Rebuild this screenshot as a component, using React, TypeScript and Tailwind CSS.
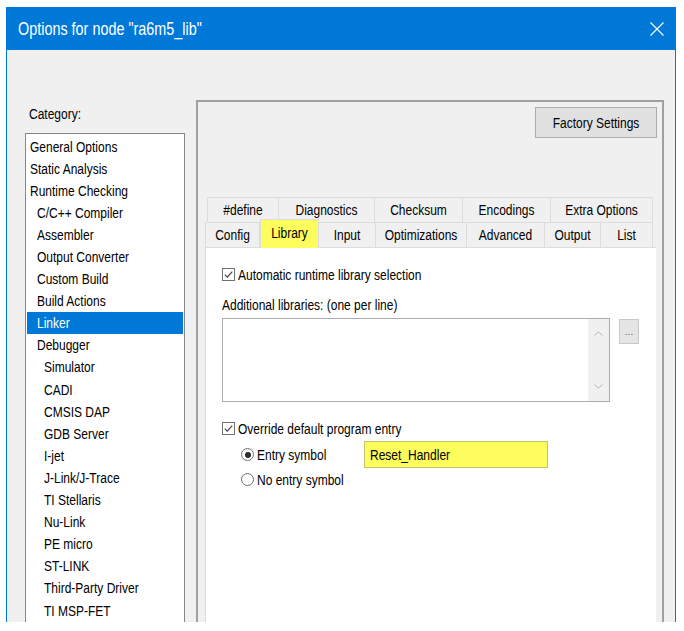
import React from "react";

// category tree: label + indent level
const categories: [string, number][] = [
  ["General Options", 0],
  ["Static Analysis", 0],
  ["Runtime Checking", 0],
  ["C/C++ Compiler", 1],
  ["Assembler", 1],
  ["Output Converter", 1],
  ["Custom Build", 1],
  ["Build Actions", 1],
  ["Linker", 1],
  ["Debugger", 1],
  ["Simulator", 2],
  ["CADI", 2],
  ["CMSIS DAP", 2],
  ["GDB Server", 2],
  ["I-jet", 2],
  ["J-Link/J-Trace", 2],
  ["TI Stellaris", 2],
  ["Nu-Link", 2],
  ["PE micro", 2],
  ["ST-LINK", 2],
  ["Third-Party Driver", 2],
  ["TI MSP-FET", 2],
];

const indent = ["pl-[4px]", "pl-[11px]", "pl-[18px]"];

const topTabs = [
  { label: "#define", w: "w-[72px]" },
  { label: "Diagnostics", w: "w-[96px]" },
  { label: "Checksum", w: "w-[88px]" },
  { label: "Encodings", w: "w-[88px]" },
  { label: "Extra Options", w: "w-[102px]" },
];

const bottomTabs = [
  { label: "Config", w: "w-[55px]" },
  { label: "Library", w: "w-[59px]" },
  { label: "Input", w: "w-[57px]" },
  { label: "Optimizations", w: "w-[91px]" },
  { label: "Advanced", w: "w-[78px]" },
  { label: "Output", w: "w-[56px]" },
  { label: "List", w: "w-[52px]" },
];

// text in the shot is drawn taller than its width suggests
function T({ children }: { children: React.ReactNode }) {
  return <span className="inline-block scale-y-[1.28] whitespace-nowrap">{children}</span>;
}

function CheckBox() {
  return (
    <div className="flex h-[13px] w-[13px] items-center justify-center border border-[#707070] bg-white">
      <svg width="11" height="11" viewBox="0 0 11 11">
        <path d="M1.8 5.6 L4.3 8.1 L9.3 2.6" fill="none" stroke="#3a3a3a" strokeWidth="1.1" />
      </svg>
    </div>
  );
}

function Radio({ on }: { on?: boolean }) {
  return (
    <div className="flex h-[13px] w-[13px] items-center justify-center rounded-full border border-[#707070] bg-white">
      {on && <div className="h-[6px] w-[6px] rounded-full bg-[#2b2b2b]" />}
    </div>
  );
}

export default function App() {
  return (
    <div className="h-[631px] w-[684px] overflow-hidden bg-white pl-[6px] pt-[7px] font-['Liberation_Sans',Arial,sans-serif] text-[12px] leading-[14px] text-black">
      <div className="flex h-[615px] w-[670px] flex-col overflow-hidden border-x border-[#0078d7] bg-[#f0f0f0]">
        {/* title bar */}
        <div className="flex h-[43px] shrink-0 items-center justify-between bg-[#0078d7] pl-[11px] pr-[11px] text-[14.4px] text-white">
          <T>Options for node "ra6m5_lib"</T>
          <svg width="14" height="14" viewBox="0 0 14 14">
            <path d="M0.5 0.5 L13.5 13.5 M13.5 0.5 L0.5 13.5" stroke="white" strokeWidth="1.1" />
          </svg>
        </div>

        <div className="flex flex-1 items-start">
          {/* category list */}
          <div className="flex flex-col pl-[18px] pt-[56px]">
            <div className="h-[16px] pl-[4px] leading-[16px]">
              <T>Category:</T>
            </div>
            <div className="mt-[11px] h-[500px] w-[160px] border border-[#828790] bg-white pt-[1.5px]">
              {categories.map(([label, lvl]) => (
                <div
                  key={label}
                  className={
                    label === "Linker"
                      ? "mx-[1px] flex h-[22.1px] items-center bg-[#0078d7] pl-[10px] text-white"
                      : `flex h-[22.1px] items-center ${indent[lvl]}`
                  }
                >
                  <T>{label}</T>
                </div>
              ))}
            </div>
          </div>

          {/* options panel */}
          <div className="ml-[11px] mt-[50px] flex h-[530px] w-[468px] flex-col border-x-2 border-t-2 border-[#a0a0a0]">
            <div className="flex justify-end pr-[5px] pt-[5px]">
              <button className="flex h-[31px] w-[122px] items-center justify-center border border-[#adadad] bg-[#e1e1e1]">
                <T>Factory Settings</T>
              </button>
            </div>

            {/* tabs */}
            <div className="ml-[9px] mt-[59px] flex h-[25px]">
              {topTabs.map((t) => (
                <div
                  key={t.label}
                  className={`flex h-[25px] items-center justify-center border-r border-t border-[#dcdcdc] first:border-l ${t.w}`}
                >
                  <T>{t.label}</T>
                </div>
              ))}
            </div>
            <div className="ml-[7px] flex h-[25px]">
              {bottomTabs.map((t) =>
                t.label === "Library" ? (
                  <div
                    key={t.label}
                    className={`relative z-10 -mt-[3px] flex h-[29px] items-center justify-center border-x border-t border-[#dcdcdc] bg-[#fdfd5e] pb-[2px] ${t.w}`}
                  >
                    <T>{t.label}</T>
                  </div>
                ) : (
                  <div
                    key={t.label}
                    className={`flex h-[25px] items-center justify-center border-r border-t border-[#dcdcdc] first:border-l ${t.w}`}
                  >
                    <T>{t.label}</T>
                  </div>
                )
              )}
            </div>

            {/* tab page */}
            <div className="ml-[7px] flex w-[451px] flex-1 flex-col border-l border-t border-[#dcdcdc] bg-white pl-[16px] pt-[20px]">
              <div className="flex h-[13px] items-center">
                <CheckBox />
                <span className="ml-[3px]">
                  <T>Automatic runtime library selection</T>
                </span>
              </div>

              <div className="mt-[17px] h-[14px]">
                <T>Additional libraries: (one per line)</T>
              </div>

              <div className="mt-[6px] flex items-start">
                <div className="flex h-[84px] w-[388px] justify-end border border-[#abadb3] bg-white">
                  <div className="flex w-[21px] flex-col items-center justify-between bg-[#f0f0f0] py-[12px]">
                    <svg width="9" height="5" viewBox="0 0 9 5">
                      <path d="M0.5 4.5 L4.5 0.8 L8.5 4.5" fill="none" stroke="#b4b4b4" />
                    </svg>
                    <svg width="9" height="5" viewBox="0 0 9 5">
                      <path d="M0.5 0.5 L4.5 4.2 L8.5 0.5" fill="none" stroke="#b4b4b4" />
                    </svg>
                  </div>
                </div>
                <button className="ml-[9px] mt-[1px] flex h-[25px] w-[20px] items-end justify-center border border-[#c8c8c8] bg-[#e5e5e5] pb-[6px] text-[10px] leading-[10px] text-[#555]">
                  ...
                </button>
              </div>

              <div className="mt-[20px] flex h-[13px] items-center">
                <CheckBox />
                <span className="ml-[3px]">
                  <T>Override default program entry</T>
                </span>
              </div>

              <div className="mt-[6px] flex h-[27px] items-center">
                <div className="flex w-[142px] items-center pl-[19px]">
                  <Radio on />
                  <span className="ml-[3px]">
                    <T>Entry symbol</T>
                  </span>
                </div>
                <div className="flex h-[27px] w-[184px] items-center border border-[#c4c46e] bg-[#fdfd5e] pl-[5px]">
                  <T>Reset_Handler</T>
                </div>
              </div>

              <div className="mt-[5px] flex h-[13px] items-center pl-[19px]">
                <Radio />
                <span className="ml-[3px]">
                  <T>No entry symbol</T>
                </span>
              </div>
            </div>
          </div>
        </div>
      </div>
    </div>
  );
}
